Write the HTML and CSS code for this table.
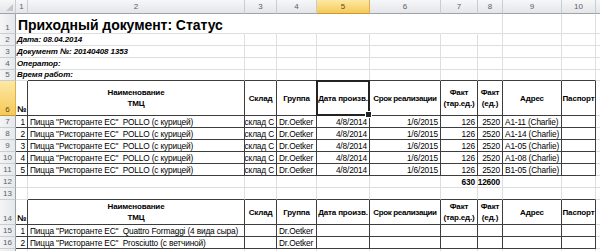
FILE: index.html
```html
<!DOCTYPE html>
<html lang="ru">
<head>
<meta charset="utf-8">
<title>Приходный документ: Статус</title>
<link rel="stylesheet" href="styles.css">
</head>
<body>
<div class="sheet">
  <div class="ch corner"></div>
  <div class="ch">1</div><div class="ch">2</div><div class="ch">3</div><div class="ch">4</div><div class="ch act">5</div><div class="ch">6</div><div class="ch">7</div><div class="ch">8</div><div class="ch">9</div><div class="ch">10</div><div class="ch"></div>

  <div class="rh">1</div>
  <div class="c nr title">Приходный документ: Статус</div>
  <div class="c nr"></div><div class="c nr"></div><div class="c nr"></div><div class="c nr"></div><div class="c nr"></div><div class="c nr"></div>
  <div class="c"></div><div class="c"></div><div class="c"></div><div class="c"></div>

  <div class="rh">2</div>
  <div class="c nr info">Дата: 08.04.2014</div>
  <div class="c"></div><div class="c"></div><div class="c"></div><div class="c"></div><div class="c"></div><div class="c"></div><div class="c"></div><div class="c"></div><div class="c"></div><div class="c"></div>

  <div class="rh">3</div>
  <div class="c nr info">Документ №: 20140408 1353</div>
  <div class="c"></div><div class="c"></div><div class="c"></div><div class="c"></div><div class="c"></div><div class="c"></div><div class="c"></div><div class="c"></div><div class="c"></div><div class="c"></div>

  <div class="rh">4</div>
  <div class="c nr info">Оператор:</div>
  <div class="c"></div><div class="c"></div><div class="c"></div><div class="c"></div><div class="c"></div><div class="c"></div><div class="c"></div><div class="c"></div><div class="c"></div><div class="c"></div>

  <div class="rh">5</div>
  <div class="c nr info">Время работ:</div>
  <div class="c B"></div><div class="c B"></div><div class="c B"></div><div class="c B"></div><div class="c B"></div><div class="c B"></div><div class="c B"></div><div class="c B"></div><div class="c B"></div><div class="c"></div>

  <div class="rh act">6</div>
  <div class="c R B no">№</div>
  <div class="c R B hd"><span>Наименование<br>ТМЦ</span></div>
  <div class="c R B hd"><span>Склад</span></div>
  <div class="c R B hd"><span>Группа</span></div>
  <div class="c R B hd cur"><span>Дата произв.</span></div>
  <div class="c R B hd tight"><span>Срок реализации</span></div>
  <div class="c R B hd"><span>Факт<br>(тар.ед.)</span></div>
  <div class="c R B hd"><span>Факт<br>(ед.)</span></div>
  <div class="c R B hd"><span>Адрес</span></div>
  <div class="c R B hd"><span>Паспорт</span></div>
  <div class="c"></div>

  <div class="rh">7</div>
  <div class="c R B rt">1</div><div class="c R B">Пицца "Ристоранте ЕС"&nbsp; POLLO (с курицей)</div><div class="c R B rt clip">склад С</div><div class="c R B">Dr.Oetker</div><div class="c R B rt">4/8/2014</div><div class="c R B rt">1/6/2015</div><div class="c R B rt">126</div><div class="c R B rt">2520</div><div class="c R B">A1-11 (Charlie)</div><div class="c R B"></div><div class="c"></div>

  <div class="rh">8</div>
  <div class="c R B rt">2</div><div class="c R B">Пицца "Ристоранте ЕС"&nbsp; POLLO (с курицей)</div><div class="c R B rt clip">склад С</div><div class="c R B">Dr.Oetker</div><div class="c R B rt">4/8/2014</div><div class="c R B rt">1/6/2015</div><div class="c R B rt">126</div><div class="c R B rt">2520</div><div class="c R B">A1-14 (Charlie)</div><div class="c R B"></div><div class="c"></div>

  <div class="rh">9</div>
  <div class="c R B rt">3</div><div class="c R B">Пицца "Ристоранте ЕС"&nbsp; POLLO (с курицей)</div><div class="c R B rt clip">склад С</div><div class="c R B">Dr.Oetker</div><div class="c R B rt">4/8/2014</div><div class="c R B rt">1/6/2015</div><div class="c R B rt">126</div><div class="c R B rt">2520</div><div class="c R B">A1-05 (Charlie)</div><div class="c R B"></div><div class="c"></div>

  <div class="rh">10</div>
  <div class="c R B rt">4</div><div class="c R B">Пицца "Ристоранте ЕС"&nbsp; POLLO (с курицей)</div><div class="c R B rt clip">склад С</div><div class="c R B">Dr.Oetker</div><div class="c R B rt">4/8/2014</div><div class="c R B rt">1/6/2015</div><div class="c R B rt">126</div><div class="c R B rt">2520</div><div class="c R B">A1-08 (Charlie)</div><div class="c R B"></div><div class="c"></div>

  <div class="rh">11</div>
  <div class="c R B rt">5</div><div class="c R B">Пицца "Ристоранте ЕС"&nbsp; POLLO (с курицей)</div><div class="c R B rt clip">склад С</div><div class="c R B">Dr.Oetker</div><div class="c R B rt">4/8/2014</div><div class="c R B rt">1/6/2015</div><div class="c R B rt">126</div><div class="c R B rt">2520</div><div class="c R B">B1-05 (Charlie)</div><div class="c R B"></div><div class="c"></div>

  <div class="rh">12</div>
  <div class="c"></div><div class="c"></div><div class="c"></div><div class="c"></div><div class="c"></div><div class="c"></div><div class="c rt tot">630</div><div class="c rt tot">12600</div><div class="c"></div><div class="c"></div><div class="c"></div>

  <div class="rh">13</div>
  <div class="c"></div><div class="c B"></div><div class="c B"></div><div class="c B"></div><div class="c B"></div><div class="c B"></div><div class="c B"></div><div class="c B"></div><div class="c B"></div><div class="c B"></div><div class="c"></div>

  <div class="rh">14</div>
  <div class="c R B no">№</div>
  <div class="c R B hd"><span>Наименование<br>ТМЦ</span></div>
  <div class="c R B hd"><span>Склад</span></div>
  <div class="c R B hd"><span>Группа</span></div>
  <div class="c R B hd"><span>Дата произв.</span></div>
  <div class="c R B hd tight"><span>Срок реализации</span></div>
  <div class="c R B hd"><span>Факт<br>(тар.ед.)</span></div>
  <div class="c R B hd"><span>Факт<br>(ед.)</span></div>
  <div class="c R B hd"><span>Адрес</span></div>
  <div class="c R B hd"><span>Паспорт</span></div>
  <div class="c"></div>

  <div class="rh">15</div>
  <div class="c R B rt">1</div><div class="c R B">Пицца "Ристоранте ЕС"&nbsp; Quattro Formaggi (4 вида сыра)</div><div class="c R B"></div><div class="c R B">Dr.Oetker</div><div class="c R B"></div><div class="c R B"></div><div class="c R B"></div><div class="c R B"></div><div class="c R B"></div><div class="c R B"></div><div class="c"></div>

  <div class="rh">16</div>
  <div class="c R B rt">2</div><div class="c R B">Пицца "Ристоранте ЕС"&nbsp; Prosciutto (с ветчиной)</div><div class="c R B"></div><div class="c R B">Dr.Oetker</div><div class="c R B"></div><div class="c R B"></div><div class="c R B"></div><div class="c R B"></div><div class="c R B"></div><div class="c R B"></div><div class="c"></div>

  <div class="rh"></div>
  <div class="c"></div><div class="c"></div><div class="c"></div><div class="c"></div><div class="c"></div><div class="c"></div><div class="c"></div><div class="c"></div><div class="c"></div><div class="c"></div><div class="c"></div>
</div>
</body>
</html>
```
FILE: styles.css
```css
* { box-sizing: border-box; }
html, body { margin: 0; background: #fff; }
body { width: 600px; height: 251px; overflow: hidden; }

.sheet {
  display: grid;
  grid-template-columns: 16px 12px 217px 32px 40px 53px 71px 37px 25px 59px 34px 40px;
  grid-template-rows: 14px 20px 12px 12px 12px 11px 35px repeat(7, 12px) 25px 12px 12px 12px;
  width: 600px;
  height: 251px;
  overflow: hidden;
  font-family: "Liberation Sans", Arial, sans-serif;
  font-size: 8.3px;
  color: #000;
}

/* column headers */
.ch {
  background: linear-gradient(#f6f7f8, #e3e5e8);
  border-right: 1px solid #c9ccd0;
  border-bottom: 1px solid #9ea3a9;
  color: #5b5f66;
  font-size: 8px;
  display: flex;
  align-items: center;
  justify-content: center;
  line-height: 10px;
}
.corner { position: relative; }
.corner::after {
  content: "";
  position: absolute;
  right: 2px;
  bottom: 2px;
  width: 0;
  height: 0;
  border-left: 7px solid transparent;
  border-bottom: 7px solid #c3c6cb;
}

/* row headers */
.rh {
  background: linear-gradient(90deg, #f3f4f6, #e6e8eb);
  border-right: 1px solid #9ea3a9;
  border-bottom: 1px solid #c9ccd0;
  color: #5b5f66;
  font-size: 8px;
  display: flex;
  align-items: flex-end;
  justify-content: center;
  line-height: 10px;
}
.ch.act, .rh.act {
  background: linear-gradient(#fde8a6, #f5c957);
  color: #5e4a16;
  border-right-color: #d9b04b;
  border-bottom-color: #c99a33;
}

/* cells */
.c {
  border-right: 1px solid #dcdee0;
  border-bottom: 1px solid #dcdee0;
  display: flex;
  align-items: flex-end;
  padding: 0 2px;
  white-space: nowrap;
  line-height: 10px;
  min-width: 0;
  letter-spacing: -0.15px;
}
.c.nr { border-right-color: transparent; }
.c.R { border-right-color: #3d3d3d; }
.c.B { border-bottom-color: #3d3d3d; }
.rt { justify-content: flex-end; }
.clip { overflow: hidden; }

.title {
  font-size: 14px;
  font-weight: bold;
  line-height: 16px;
  letter-spacing: -0.05px;
}
.info {
  font-size: 8px;
  font-weight: bold;
  font-style: italic;
  padding-left: 1px;
  letter-spacing: -0.1px;
}
.no {
  font-weight: bold;
  padding-left: 1px;
  padding-bottom: 1px;
}
.hd {
  align-items: center;
  justify-content: center;
  text-align: center;
  font-weight: bold;
  font-size: 8px;
  line-height: 11px;
  letter-spacing: -0.15px;
  padding: 0 1px;
}
.hd.tight { letter-spacing: -0.35px; }
.tot { font-weight: bold; }

/* active cell */
.cur { position: relative; z-index: 2; }
.cur::after {
  content: "";
  position: absolute;
  left: -1px;
  top: -1px;
  right: -1px;
  bottom: -1px;
  border: 2px solid #222;
}
.cur::before {
  content: "";
  position: absolute;
  right: -3px;
  bottom: -3px;
  width: 5px;
  height: 5px;
  background: #222;
  border: 1px solid #fff;
  z-index: 3;
}
```
